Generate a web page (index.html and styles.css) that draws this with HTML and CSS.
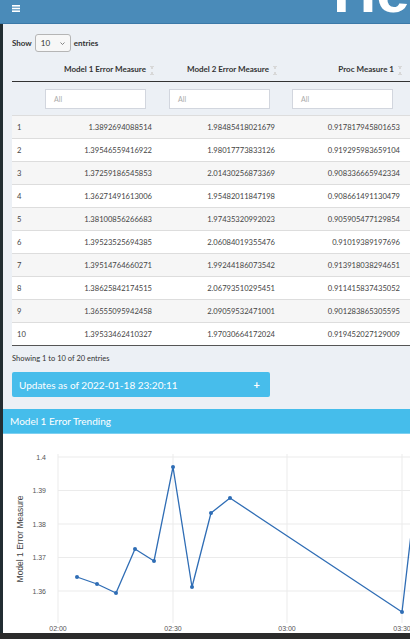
FILE: index.html
```html
<!DOCTYPE html>
<html>
<head>
<meta charset="utf-8">
<link rel="stylesheet" href="styles.css">
</head>
<body>
<header class="topbar">
  <svg class="menu-toggle" width="8" height="7" viewBox="0 0 8 7"><rect x="0" y="0" width="8" height="1.6" fill="#fff"/><rect x="0" y="2.7" width="8" height="1.6" fill="#fff"/><rect x="0" y="5.4" width="8" height="1.6" fill="#fff"/></svg>
  <span class="brand">Health Monitor</span>
</header>
<div class="layout">
  <aside class="rail"></aside>
  <main class="content">
    <section class="table-section">
      <div class="length-row">
        <span class="bold">Show</span>
        <span class="select">10<svg width="5" height="3" viewBox="0 0 5 3"><path d="M0.5 0.5 L2.5 2.5 L4.5 0.5" fill="none" stroke="#666" stroke-width="0.8"/></svg></span>
        <span class="bold">entries</span>
      </div>
      <table class="grid">
        <colgroup><col class="c0"><col class="c1"><col class="c2"><col class="c3"></colgroup>
        <thead>
          <tr class="head-row">
            <th></th>
            <th>Model 1 Error Measure<span class="sort"></span></th>
            <th>Model 2 Error Measure<span class="sort"></span></th>
            <th class="last">Proc Measure 1<span class="sort"></span></th>
          </tr>
          <tr class="filter-row">
            <th></th>
            <th><div class="filter">All</div></th>
            <th><div class="filter">All</div></th>
            <th><div class="filter">All</div></th>
          </tr>
        </thead>
        <tbody>
          <tr><td>1</td><td>1.3892694088514</td><td>1.98485418021679</td><td>0.917817945801653</td></tr>
          <tr><td>2</td><td>1.39546559416922</td><td>1.98017773833126</td><td>0.919295983659104</td></tr>
          <tr><td>3</td><td>1.37259186545853</td><td>2.01430256873369</td><td>0.908336665942334</td></tr>
          <tr><td>4</td><td>1.36271491613006</td><td>1.95482011847198</td><td>0.908661491130479</td></tr>
          <tr><td>5</td><td>1.38100856266683</td><td>1.97435320992023</td><td>0.905905477129854</td></tr>
          <tr><td>6</td><td>1.39523525694385</td><td>2.06084019355476</td><td>0.91019389197696</td></tr>
          <tr><td>7</td><td>1.39514764660271</td><td>1.99244186073542</td><td>0.913918038294651</td></tr>
          <tr><td>8</td><td>1.38625842174515</td><td>2.06793510295451</td><td>0.911415837435052</td></tr>
          <tr><td>9</td><td>1.36555095942458</td><td>2.09059532471001</td><td>0.901283865305595</td></tr>
          <tr><td>10</td><td>1.39533462410327</td><td>1.97030664172024</td><td>0.919452027129009</td></tr>
        </tbody>
      </table>
      <div class="info">Showing 1 to 10 of 20 entries</div>
      <div class="update-box"><span>Updates as of 2022-01-18 23:20:11</span><span class="plus">+</span></div>
    </section>
    <section class="trend">
      <div class="trend-head">Model 1 Error Trending</div>
      <div class="chart">
        <svg width="407" height="199" viewBox="0 0 407 199">
          <g stroke="#ebebeb" stroke-width="1">
            <line x1="55" y1="23" x2="407" y2="23"/>
            <line x1="55" y1="56.5" x2="407" y2="56.5"/>
            <line x1="55" y1="90" x2="407" y2="90"/>
            <line x1="55" y1="123.5" x2="407" y2="123.5"/>
            <line x1="55" y1="157" x2="407" y2="157"/>
            <line x1="55" y1="20" x2="55" y2="189"/>
            <line x1="170" y1="20" x2="170" y2="189"/>
            <line x1="284" y1="20" x2="284" y2="189"/>
            <line x1="399" y1="20" x2="399" y2="189"/>
          </g>
          <g class="tick" text-anchor="end">
            <text x="43" y="25.5">1.4</text>
            <text x="43" y="59">1.39</text>
            <text x="43" y="92.5">1.38</text>
            <text x="43" y="126">1.37</text>
            <text x="43" y="159.5">1.36</text>
          </g>
          <g class="tick" text-anchor="middle">
            <text x="55" y="196.5">02:00</text>
            <text x="170" y="196.5">02:30</text>
            <text x="284" y="196.5">03:00</text>
            <text x="399" y="196.5">03:30</text>
          </g>
          <text class="axis-title" transform="translate(20,105) rotate(-90)" text-anchor="middle">Model 1 Error Measure</text>
          <polyline fill="none" stroke="#2f6db5" stroke-width="1.3" stroke-linejoin="round" points="74,143 94,150 113,159 132,115 151,127 170,33 189,153 208,79 227,64 399,178 412,66"/>
          <g fill="#2f6db5">
            <circle cx="74" cy="143" r="2"/>
            <circle cx="94" cy="150" r="2"/>
            <circle cx="113" cy="159" r="2"/>
            <circle cx="132" cy="115" r="2"/>
            <circle cx="151" cy="127" r="2"/>
            <circle cx="170" cy="33" r="2"/>
            <circle cx="189" cy="153" r="2"/>
            <circle cx="208" cy="79" r="2"/>
            <circle cx="227" cy="64" r="2"/>
            <circle cx="399" cy="178" r="2"/>
          </g>
        </svg>
      </div>
    </section>
  </main>
</div>
<footer class="bottombar"></footer>
</body>
</html>
```
FILE: styles.css
```css
html, body {
  margin: 0;
  padding: 0;
}
body {
  width: 410px;
  height: 639px;
  overflow: hidden;
  background: #ecf0f5;
  font-family: Lato, "Open Sans", sans-serif;
  color: #333;
}
.topbar {
  height: 23px;
  background: #4a8bb9;
  border-bottom: 1px solid #3b79a8;
  display: flex;
  align-items: flex-start;
  overflow: hidden;
}
.menu-toggle {
  flex: none;
  margin: 5px 0 0 12px;
}
.brand {
  margin-left: 313px;
  margin-top: -38px;
  font: bold 60px/60px "Liberation Sans", Arial, sans-serif;
  color: #fff;
  white-space: nowrap;
}
.layout {
  display: flex;
}
.rail {
  flex: none;
  width: 3px;
  background: #222d32;
}
.content {
  flex: 1;
  min-width: 0;
  overflow: hidden;
}
.table-section {
  padding: 10px 0 12px 9px;
}
.length-row {
  display: flex;
  align-items: center;
  gap: 3px;
  height: 18px;
  font-size: 8px;
}
.bold {
  font-weight: bold;
}
.select {
  box-sizing: border-box;
  width: 36px;
  height: 18px;
  border: 1px solid #b5b5b5;
  border-radius: 3px;
  background: #f7f7f7;
  display: flex;
  align-items: center;
  justify-content: space-between;
  padding: 0 5px 0 5px;
  font-size: 8px;
}
.grid {
  margin-top: 6px;
  width: 401px;
  table-layout: fixed;
  border-collapse: collapse;
  font-size: 7.6px;
}
.c0 { width: 24px; }
.c1 { width: 124px; }
.c2 { width: 123px; }
.c3 { width: 130px; }
.head-row th {
  height: 23px;
  padding: 0 6px 0 0;
  text-align: right;
  font-weight: bold;
  font-size: 8px;
  border-bottom: 1px solid #333;
  vertical-align: middle;
  white-space: nowrap;
}
.head-row th.last {
  padding-right: 11px;
}
.sort {
  display: inline-block;
  width: 4px;
  height: 9px;
  margin-left: 4px;
  vertical-align: middle;
  background:
    linear-gradient(to top right, transparent 50%, #d8d8d8 50%) 0 0 / 2px 4px no-repeat,
    linear-gradient(to top left, transparent 50%, #d8d8d8 50%) 2px 0 / 2px 4px no-repeat,
    linear-gradient(to bottom right, transparent 50%, #d8d8d8 50%) 0 5px / 2px 4px no-repeat,
    linear-gradient(to bottom left, transparent 50%, #d8d8d8 50%) 2px 5px / 2px 4px no-repeat;
}
.filter-row th {
  height: 33px;
  box-sizing: border-box;
  padding: 7px 0 6px 9px;
  text-align: left;
  font-weight: normal;
}
.filter {
  box-sizing: border-box;
  width: 101px;
  height: 20px;
  background: #fff;
  border: 1px solid #d2d6de;
  font-size: 7px;
  color: #aaa;
  line-height: 18px;
  padding-left: 8px;
}
.grid tbody td {
  height: 22px;
  padding: 0 8px 0 5px;
  border-top: 1px solid #ddd;
  text-align: right;
  white-space: nowrap;
  color: #444;
}
.grid tbody td:first-child {
  text-align: left;
}
.grid tbody td:last-child {
  padding-right: 13px;
}
.grid tbody tr:nth-child(odd) {
  background: #f6f6f6;
}
.grid tbody tr:nth-child(even) {
  background: #fff;
}
.grid tbody tr:last-child td {
  border-bottom: 1px solid #555;
}
.info {
  margin-top: 8px;
  height: 10px;
  line-height: 10px;
  font-size: 7.5px;
  color: #333;
}
.update-box {
  box-sizing: border-box;
  margin-top: 8px;
  width: 258px;
  height: 25px;
  background: #47bdeb;
  border-radius: 2px;
  display: flex;
  align-items: center;
  justify-content: space-between;
  padding: 0 10px 0 7px;
  color: #fff;
  font-size: 10px;
}
.plus {
  font-weight: bold;
  font-size: 11px;
}
.trend-head {
  box-sizing: border-box;
  height: 25px;
  line-height: 24px;
  background: #45bdeb;
  border-bottom: 1px solid #7dd0f1;
  color: #fff;
  padding-left: 7px;
  font-size: 10px;
}
.chart {
  height: 199px;
  background: #fff;
}
.chart svg {
  display: block;
}
.tick {
  font-family: "Liberation Sans", Arial, sans-serif;
  font-size: 7px;
  fill: #555;
}
.axis-title {
  font-family: "Liberation Sans", Arial, sans-serif;
  font-size: 8.5px;
  fill: #444;
}
.bottombar {
  height: 6px;
  background: #2b2b2b;
}
```
